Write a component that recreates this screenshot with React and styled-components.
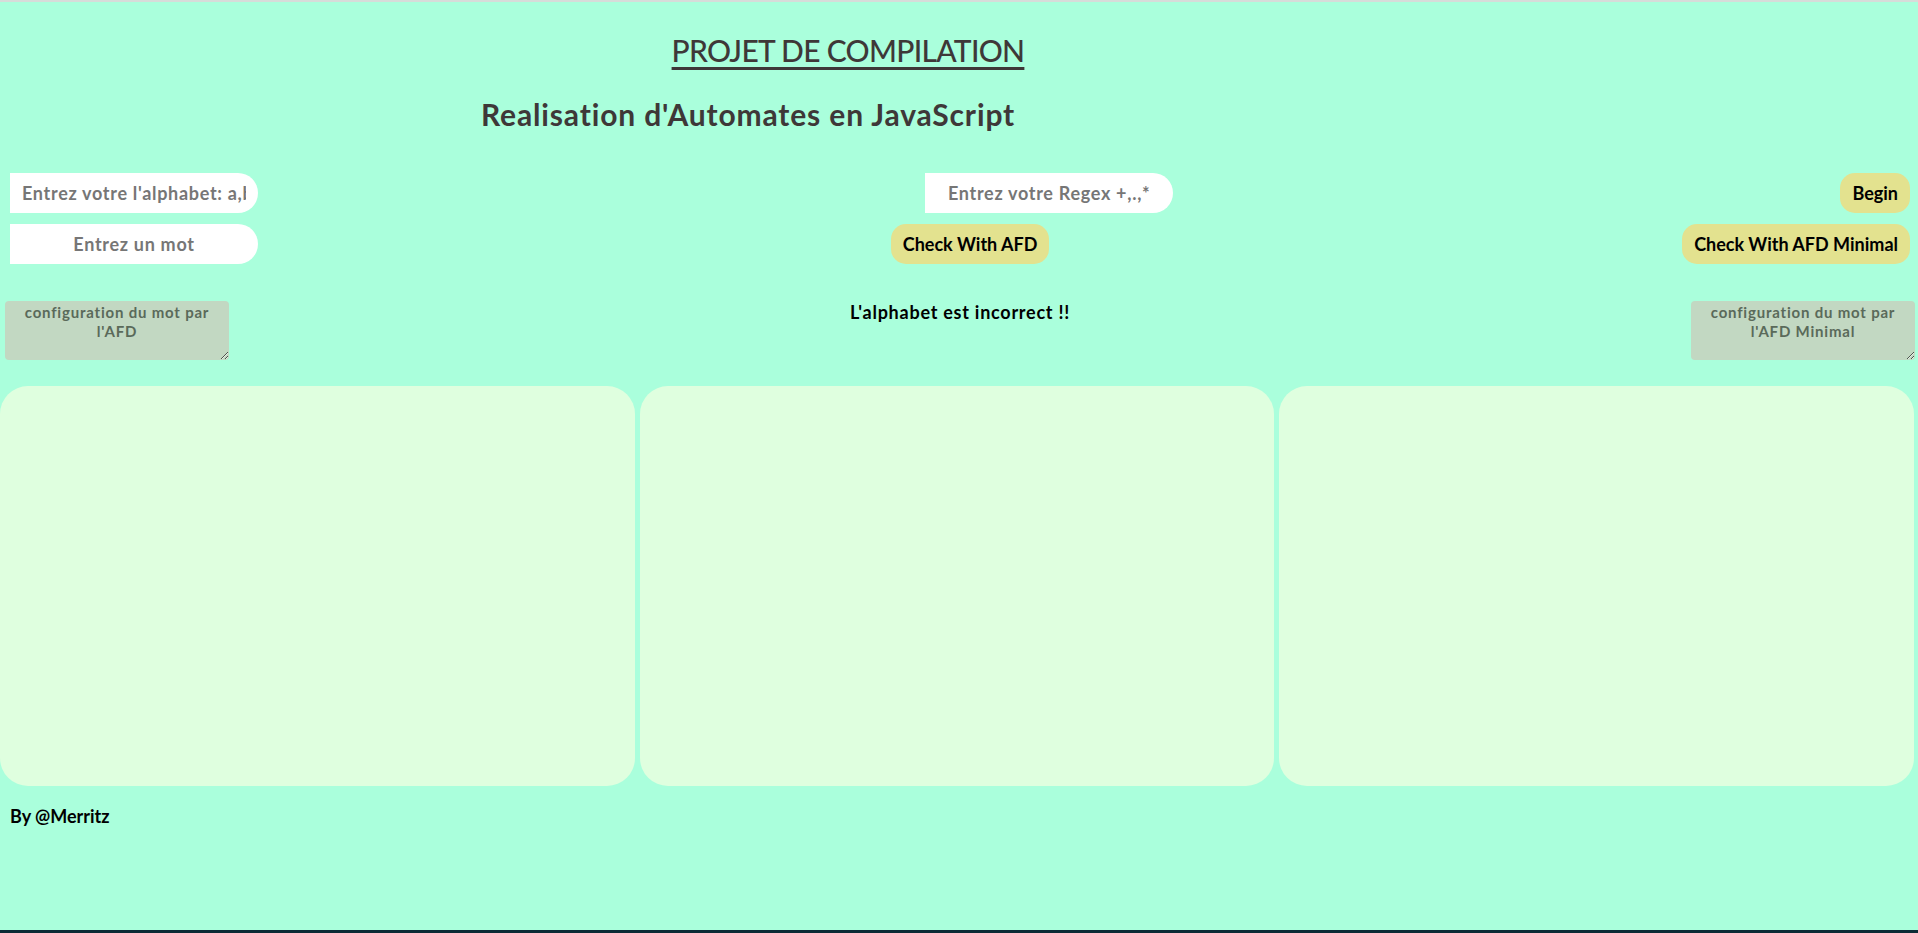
import styled, { createGlobalStyle } from "styled-components"

const GlobalStyle = createGlobalStyle`
    body {
        margin: 0;
        background: #aaffdc;
        font-family: Lato, "Open Sans", sans-serif;
    }
`

const Page = styled.div`
    min-height: 100vh;
    box-sizing: border-box;
    border-top: 2px solid #d7dcd9;
    border-bottom: 3px solid #0b2b35;
    background: #aaffdc;
    display: flex;
    flex-direction: column;
`
const Title = styled.h1`
    margin: 30px 0 0;
    padding-right: 222px;
    text-align: center;
    font-size: 30px;
    line-height: 36px;
    font-weight: 500;
    letter-spacing: -0.7px;
    color: #3e3838;
    text-decoration: underline;
    text-underline-offset: 5px;
    text-decoration-thickness: 3px;
`
const Subtitle = styled.h2`
    margin: 28px 0 0;
    padding-right: 422px;
    text-align: center;
    font-size: 30px;
    line-height: 36px;
    font-weight: 700;
    letter-spacing: 0.85px;
    color: #3e3838;
`
const Controls = styled.div`
    margin-top: 41px;
    padding: 0 8px 0 10px;
    display: flex;
    flex-direction: column;
    gap: 11px;
`
const Row = styled.div`
    display: flex;
    justify-content: space-between;
    align-items: center;
`
const Field = styled.input`
    box-sizing: border-box;
    width: 248px;
    height: 40px;
    border: none;
    outline: none;
    border-radius: 0 20px 20px 0;
    background: #fff;
    padding: 0 12px;
    text-align: center;
    font-family: inherit;
    font-size: 18px;
    font-weight: 700;
    letter-spacing: 0.7px;
    color: #333;
    &::placeholder {
        color: #767676;
        font-weight: 700;
    }
`
const Button = styled.button`
    height: 40px;
    padding: 0 12px;
    border: none;
    border-radius: 15px;
    background: #e3e28f;
    font-family: inherit;
    font-size: 18px;
    font-weight: 700;
    color: #000;
    cursor: pointer;
`
const StatusRow = styled.div`
    margin-top: 37px;
    padding: 0 3px 0 5px;
    display: flex;
    justify-content: space-between;
    align-items: flex-start;
`
const ConfigBox = styled.textarea`
    box-sizing: border-box;
    width: 224px;
    height: 59px;
    margin: 0;
    padding: 2px 8px;
    border: none;
    outline: none;
    border-radius: 4px;
    background: #c2d8c2;
    text-align: center;
    font-family: inherit;
    font-size: 15px;
    line-height: 19px;
    font-weight: 700;
    letter-spacing: 0.8px;
    color: #5a6a5a;
    &::placeholder {
        color: #5a6a5a;
    }
`
const Message = styled.p`
    margin: 0;
    font-size: 18px;
    line-height: 22px;
    font-weight: 700;
    letter-spacing: 0.75px;
    color: #000;
`
const Panels = styled.div`
    margin-top: 26px;
    padding-right: 4px;
    display: flex;
    gap: 5px;
`
const Panel = styled.div`
    flex: 1;
    height: 400px;
    border-radius: 28px;
    background: #dfffdf;
`
const Credit = styled.p`
    margin: 19px 0 0 10px;
    font-size: 18px;
    line-height: 22px;
    font-weight: 700;
    color: #000;
`

export default function App() {
    return (
        <Page>
            <GlobalStyle />
            <Title>PROJET DE COMPILATION</Title>
            <Subtitle>Realisation d'Automates en JavaScript</Subtitle>
            <Controls>
                <Row>
                    <Field placeholder="Entrez votre l'alphabet: a,b,c" />
                    <Field placeholder="Entrez votre Regex +,.,*" />
                    <Button>Begin</Button>
                </Row>
                <Row>
                    <Field placeholder="Entrez un mot" />
                    <Button>Check With AFD</Button>
                    <Button>Check With AFD Minimal</Button>
                </Row>
            </Controls>
            <StatusRow>
                <ConfigBox placeholder="configuration du mot par l'AFD" />
                <Message>L'alphabet est incorrect !!</Message>
                <ConfigBox placeholder="configuration du mot par l'AFD Minimal" />
            </StatusRow>
            <Panels>
                <Panel />
                <Panel />
                <Panel />
            </Panels>
            <Credit>By @Merritz</Credit>
        </Page>
    )
}
